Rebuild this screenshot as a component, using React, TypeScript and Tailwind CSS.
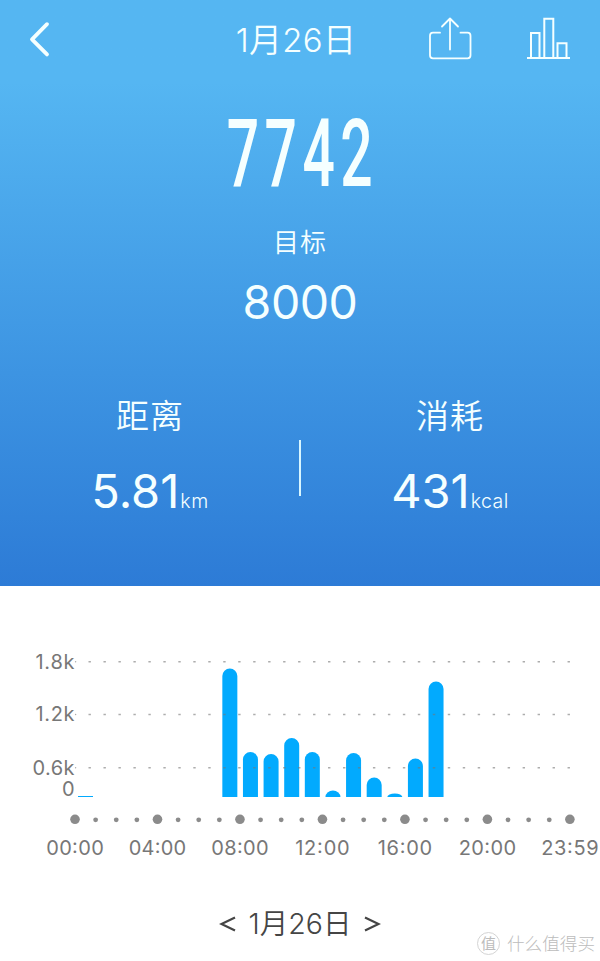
const hours = [
  { hour: 0, height: 1 },
  { hour: 7, height: 128.5 },
  { hour: 8, height: 45 },
  { hour: 9, height: 43 },
  { hour: 10, height: 59 },
  { hour: 11, height: 45 },
  { hour: 12, height: 6.5 },
  { hour: 13, height: 44 },
  { hour: 14, height: 19.5 },
  { hour: 15, height: 3.5 },
  { hour: 16, height: 38.5 },
  { hour: 17, height: 115.5 },
];

const gridLines = [
  { label: '1.8k', y: 75.8, width: 39 },
  { label: '1.2k', y: 128.5, width: 39 },
  { label: '0.6k', y: 181.8, width: 42 },
];

const times = ['00:00', '04:00', '08:00', '12:00', '16:00', '20:00', '23:59'];

const STEP = 20.62;
const BASE = 211;

function barPath(hour: number, height: number) {
  const x = 78 + hour * STEP;
  if (height < 2) return `M${x} ${BASE}v${-height}h15v${height}Z`;
  const r = Math.min(7.5, height);
  const top = BASE - height;
  return `M${x} ${BASE}V${top + r}a7.5 ${r} 0 0 1 15 0V${BASE}Z`;
}

function StepsChart() {
  return (
    <svg width="600" height="290" viewBox="0 0 600 290" className="block font-['Inter',sans-serif] text-[20px]">
      {hours.map((h) => (
        <path key={h.hour} d={barPath(h.hour, h.height)} fill="#02aafe" />
      ))}

      {gridLines.map((g) => (
        <g key={g.label}>
          <line x1="88.5" x2="571" y1={g.y} y2={g.y} stroke="#777777" strokeOpacity="0.6" strokeWidth="1.5" strokeDasharray="2.4 12.57" />
          <text x={74.5 - g.width} y={g.y + 6.7} textLength={g.width} fill="#777777">{g.label}</text>
          <circle cx="75.6" cy={g.y} r="0.7" fill="#aaaaaa" />
        </g>
      ))}
      <text x="74.5" y="209.5" textAnchor="end" fill="#777777">0</text>

      {Array.from({ length: 25 }, (_, i) => (
        <circle key={i} cx={75 + i * STEP} cy={i % 4 === 0 ? 233.3 : 233.8} r={i % 4 === 0 ? 4.8 : 2.4} fill="#8b8b8b" />
      ))}

      {times.map((t, i) => (
        <text key={t} x={75 + i * STEP * 4} y="269" textAnchor="middle" textLength={i === 3 || i === 4 ? 54.5 : 57.5} fill="#777777">{t}</text>
      ))}
    </svg>
  );
}

function Metric({ label, value, unit }: { label: string; value: string; unit: string }) {
  return (
    <div className="flex w-[300px] flex-col items-center">
      <span className="h-[50px] text-[33px] leading-[50px] tracking-[1px]">{label}</span>
      <div className="mt-[20px] flex h-[60px] items-baseline leading-[60px]">
        <span className="text-[47px] font-normal">{value}</span>
        <span className="pl-px text-[19.5px] tracking-[0.5px]">{unit}</span>
      </div>
    </div>
  );
}

export default function App() {
  return (
    <div className="flex h-[961px] w-[600px] flex-col overflow-hidden bg-white font-['Inter','Noto_Sans_CJK_SC',sans-serif]">
      <section className="flex h-[586px] flex-col bg-linear-to-b from-[#55b6f2] from-[14%] to-[#2d7bd6] font-[360] text-[#f5ffff]">
        <header className="grid h-20 grid-cols-[200px_190px_210px] items-center">
          <svg width="60" height="80" viewBox="0 0 60 80" fill="none" stroke="currentColor" strokeWidth="3.8" strokeLinecap="round" strokeLinejoin="round">
            <path d="M47 24.2L32 39.3L47 54.4" />
          </svg>
          <h1 className="pl-[2px] text-center text-[33px] font-[350] leading-[80px] tracking-[0.3px]">1月26日</h1>
          <div className="flex">
            <svg width="100" height="80" viewBox="0 0 100 80" fill="none" stroke="currentColor" strokeWidth="1.8" strokeLinecap="round" strokeLinejoin="round">
              <path d="M50 32.7H43Q40 32.7 40 35.7V55.3Q40 58.3 43 58.3H77.5Q80.5 58.3 80.5 55.3V35.7Q80.5 32.7 77.5 32.7H70.5" />
              <path d="M60 49.5V18.5M52 26.5L60 18.5L68 26.5" />
            </svg>
            <svg width="110" height="80" viewBox="0 0 110 80" fill="none" stroke="currentColor" strokeWidth="2">
              <path d="M37 58H80M41 58V33H49.5V58M54.3 58V18.7H63.3V58M67.5 58V43.3H76.5V58" />
            </svg>
          </div>
        </header>

        <div className="flex h-[305px] flex-col items-center">
          <div className="mt-[27px] h-[94px] origin-center scale-x-[0.6] pl-[8px] font-['Roboto',sans-serif] text-[95px] font-medium leading-[94px] tracking-[9px]">7742</div>
          <span className="mt-[22px] h-10 text-[26px] leading-10 tracking-[1px]">目标</span>
          <span className="mt-[9px] h-[60px] text-[46.5px] font-normal leading-[60px] tracking-[-0.5px]">8000</span>
        </div>

        <div className="flex h-[150px] pt-[6px]">
          <Metric label="距离" value="5.81" unit="km" />
          <div className="-mx-px mt-[49px] h-14 w-0.5 bg-[#d8f6ff]" />
          <Metric label="消耗" value="431" unit="kcal" />
        </div>
      </section>

      <StepsChart />

      <footer className="flex h-[85px] items-center text-[#454545]">
        <div className="mt-[10px] flex w-[440px] items-center justify-between pl-[219px] pr-[59px] text-[28.5px] font-[350] leading-[40px]">
          <svg width="17" height="18" viewBox="0 0 17 18" fill="none" stroke="currentColor" strokeWidth="2.2">
            <path d="M16 2.5L2.5 9L16 15.5" />
          </svg>
          <span>1月26日</span>
          <svg width="17" height="18" viewBox="0 0 17 18" fill="none" stroke="currentColor" strokeWidth="2.2">
            <path d="M1 2.5L14.5 9L1 15.5" />
          </svg>
        </div>
        <div className="mt-[50px] flex items-center gap-[7px] pl-[37px] text-[#bcbcbc]">
          <span className="flex size-[23px] items-center justify-center rounded-full border border-[#d4d4d4] text-[15px] leading-none">值</span>
          <span className="whitespace-nowrap text-[17.6px] font-light leading-6">什么值得买</span>
        </div>
      </footer>
    </div>
  );
}
